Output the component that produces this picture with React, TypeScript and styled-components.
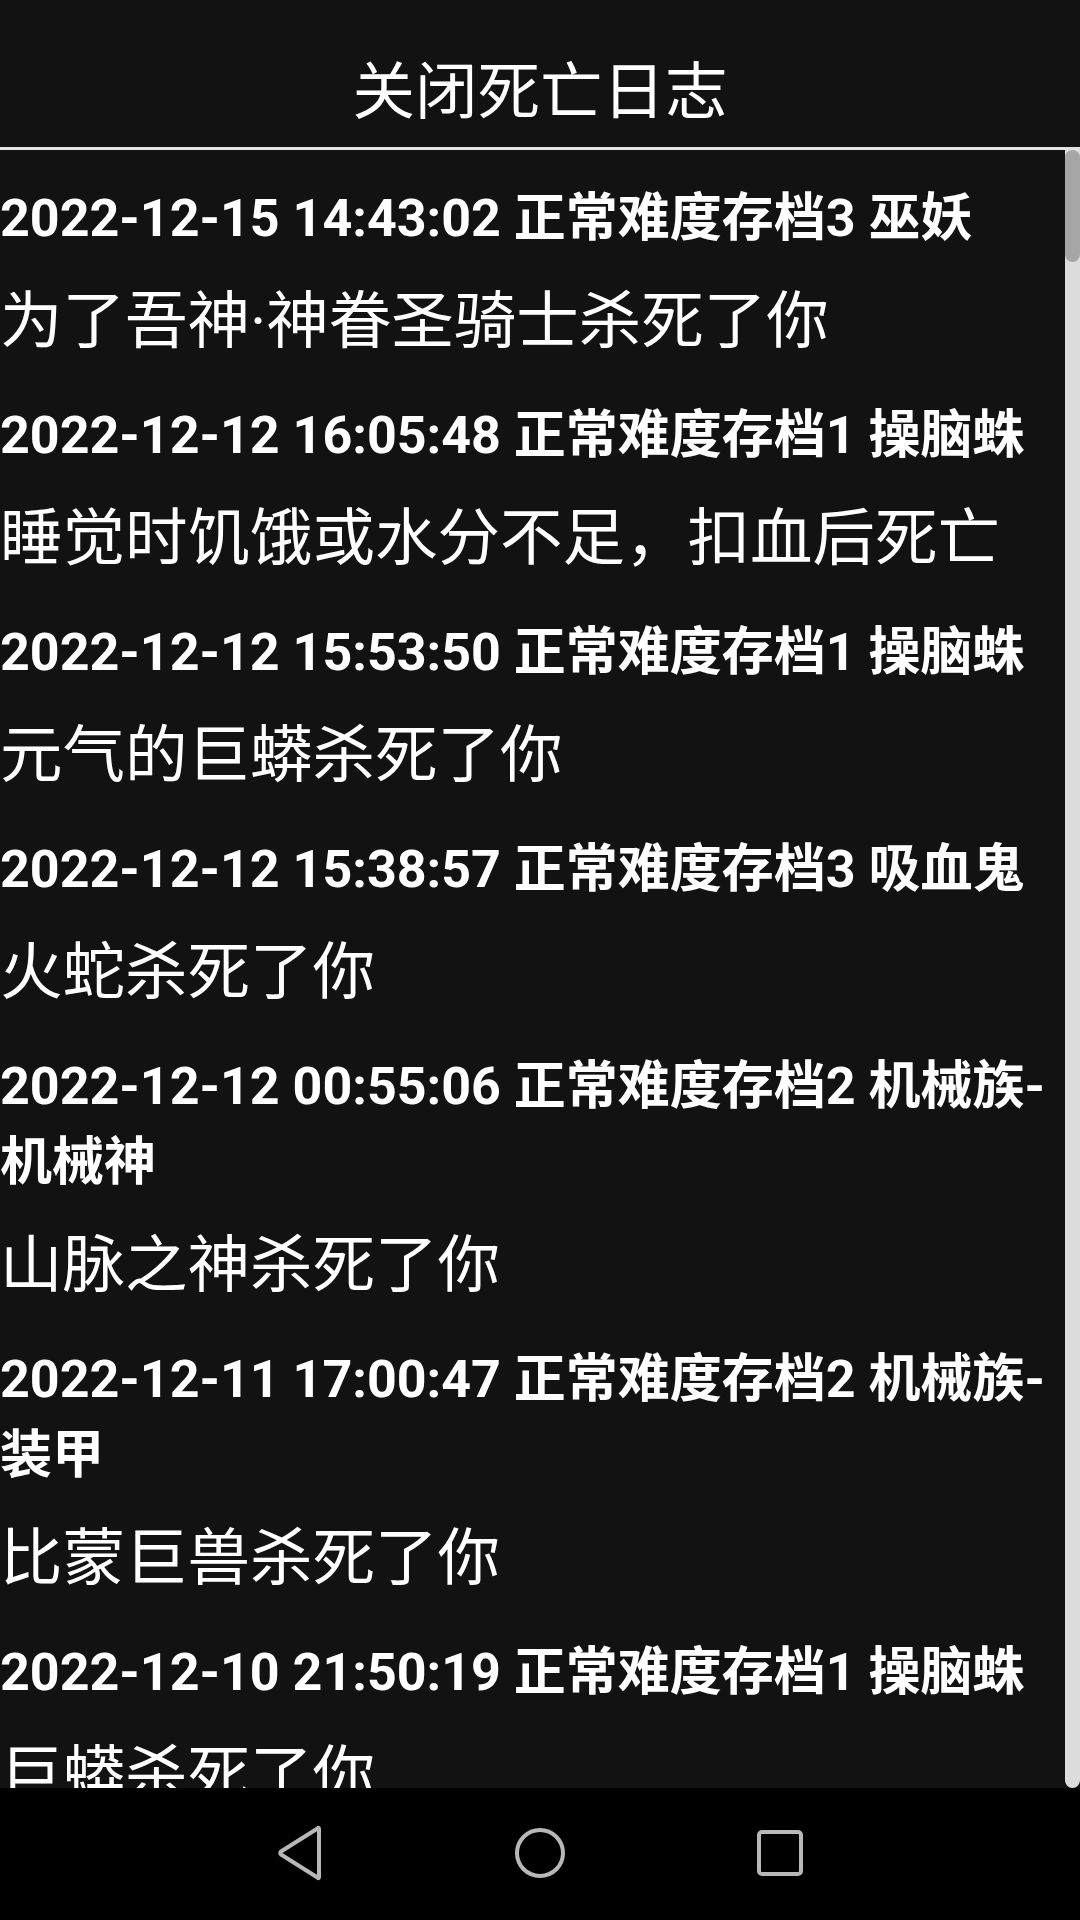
import styled, { createGlobalStyle } from 'styled-components';

const GlobalStyle = createGlobalStyle`
	* {
		box-sizing: border-box;
	}
	html,
	body {
		margin: 0;
		padding: 0;
		background: #000;
	}
	body {
		font-family: Roboto, 'Noto Sans CJK SC', sans-serif;
		color: #fff;
	}
`;

const StyledScreen = styled.div`
	display: flex;
	flex-direction: column;
	width: 1080px;
	height: 1920px;
	overflow: hidden;
	background-color: #121212;
`;
const StyledHeader = styled.header`
	flex: none;
	height: 150px;
	padding-top: 48px;
	border-bottom: 3px solid #e1e1e1;
	text-align: center;
`;
const StyledTitle = styled.h1`
	margin: 0;
	font-size: 62.5px;
	font-weight: 400;
	line-height: 89px;
`;
const StyledBody = styled.div`
	flex: 1;
	display: flex;
	min-height: 0;
`;
const StyledLogList = styled.ul`
	flex: 1;
	display: flex;
	flex-direction: column;
	gap: 32px;
	margin: 0;
	padding: 31px 0 0;
	list-style: none;
	overflow: hidden;
`;
const StyledLogItem = styled.li`
	display: flex;
	flex-direction: column;
	gap: 20px;
`;
const StyledLogHead = styled.div`
	font-size: 52px;
	font-weight: 700;
	line-height: 76px;
`;
const StyledLogText = styled.div`
	font-size: 62.5px;
	font-weight: 400;
	line-height: 89px;
`;
const StyledScrollTrack = styled.div`
	flex: none;
	width: 15px;
	background-color: #dcdcdc;
	border-radius: 0 0 8px 8px;
`;
const StyledScrollThumb = styled.div<{ $size: number }>`
	height: ${({ $size }) => $size}px;
	background-color: #a6a6a6;
	border-radius: 8px;
`;
const StyledNavBar = styled.nav`
	flex: none;
	display: flex;
	justify-content: center;
	align-items: center;
	height: 132px;
	padding-bottom: 2px;
	background-color: #000;
`;
const StyledNavButton = styled.button`
	display: flex;
	justify-content: center;
	align-items: center;
	width: 240px;
	height: 100%;
	padding: 0;
	border: 0;
	background: none;
	color: #b8b8b8;
`;

interface DeathLog {
	time: string;
	save: string;
	role: string;
	cause: string;
}

const logs: DeathLog[] = [
	{ time: '2022-12-15 14:43:02', save: '正常难度存档3', role: '巫妖', cause: '为了吾神·神眷圣骑士杀死了你' },
	{ time: '2022-12-12 16:05:48', save: '正常难度存档1', role: '操脑蛛', cause: '睡觉时饥饿或水分不足，扣血后死亡' },
	{ time: '2022-12-12 15:53:50', save: '正常难度存档1', role: '操脑蛛', cause: '元气的巨蟒杀死了你' },
	{ time: '2022-12-12 15:38:57', save: '正常难度存档3', role: '吸血鬼', cause: '火蛇杀死了你' },
	{ time: '2022-12-12 00:55:06', save: '正常难度存档2', role: '机械族-机械神', cause: '山脉之神杀死了你' },
	{ time: '2022-12-11 17:00:47', save: '正常难度存档2', role: '机械族-装甲', cause: '比蒙巨兽杀死了你' },
	{ time: '2022-12-10 21:50:19', save: '正常难度存档1', role: '操脑蛛', cause: '巨蟒杀死了你' },
	{ time: '2022-12-09 20:12:33', save: '正常难度存档1', role: '操脑蛛', cause: '饥饿而死' },
];

function BackIcon() {
	return (
		<svg width="50" height="56" viewBox="0 0 50 56" fill="none">
			<path
				d="M44 4 L44 52 Q44 54 42.5 52.5 L6 29.5 Q4.5 28 6 26.5 L42.5 3.5 Q44 2 44 4 Z"
				stroke="currentColor"
				strokeWidth="4"
				strokeLinejoin="round"
			/>
		</svg>
	);
}

function HomeIcon() {
	return (
		<svg width="54" height="54" viewBox="0 0 54 54" fill="none">
			<circle cx="27" cy="27" r="23" stroke="currentColor" strokeWidth="4" />
		</svg>
	);
}

function RecentIcon() {
	return (
		<svg width="50" height="50" viewBox="0 0 50 50" fill="none">
			<rect x="4" y="4" width="42" height="42" rx="3" stroke="currentColor" strokeWidth="4" />
		</svg>
	);
}

export default function App() {
	return (
		<>
			<GlobalStyle />
			<StyledScreen>
				<StyledHeader>
					<StyledTitle>关闭死亡日志</StyledTitle>
				</StyledHeader>
				<StyledBody>
					<StyledLogList>
						{logs.map((log, index) => (
							<StyledLogItem key={`death-log-${index}`}>
								<StyledLogHead>
									{log.time} {log.save} {log.role}
								</StyledLogHead>
								<StyledLogText>{log.cause}</StyledLogText>
							</StyledLogItem>
						))}
					</StyledLogList>
					<StyledScrollTrack>
						<StyledScrollThumb $size={112} />
					</StyledScrollTrack>
				</StyledBody>
				<StyledNavBar>
					<StyledNavButton aria-label="back">
						<BackIcon />
					</StyledNavButton>
					<StyledNavButton aria-label="home">
						<HomeIcon />
					</StyledNavButton>
					<StyledNavButton aria-label="recent">
						<RecentIcon />
					</StyledNavButton>
				</StyledNavBar>
			</StyledScreen>
		</>
	);
}
